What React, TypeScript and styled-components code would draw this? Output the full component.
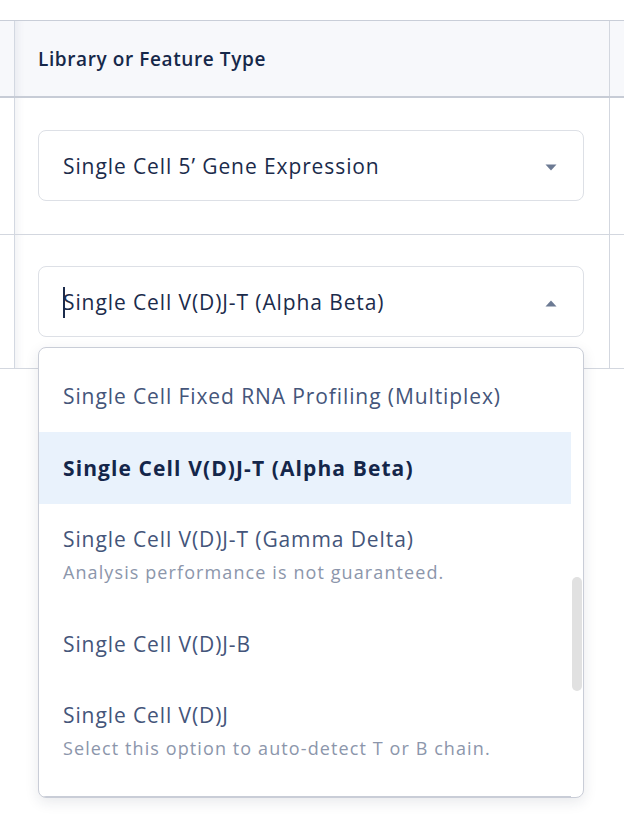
import React from 'react';
import styled, { createGlobalStyle } from 'styled-components';

const GlobalStyle = createGlobalStyle`
  html, body {
    margin: 0;
    padding: 0;
    background: #ffffff;
    overflow: hidden;
  }
  body {
    font-family: "Open Sans", Lato, sans-serif;
    -webkit-font-smoothing: antialiased;
  }
`;

type Option = { label: string; hint?: string; active?: boolean };

const options: Option[] = [
  { label: 'Single Cell Fixed RNA Profiling (Multiplex)' },
  { label: 'Single Cell V(D)J-T (Alpha Beta)', active: true },
  { label: 'Single Cell V(D)J-T (Gamma Delta)', hint: 'Analysis performance is not guaranteed.' },
  { label: 'Single Cell V(D)J-B' },
  { label: 'Single Cell V(D)J', hint: 'Select this option to auto-detect T or B chain.' },
];

const Caret: React.FC<{ up?: boolean }> = ({ up }) => (
  <CaretIcon width="12" height="7" viewBox="0 0 12 7" $up={up}>
    <path d="M0.5 0.5 L11.5 0.5 L6 6.5 Z" fill="#6c7a93" />
  </CaretIcon>
);

const App: React.FC = () => {
  return (
    <Page>
      <GlobalStyle />
      <Table>
        <HeaderRow>
          <EdgeCell />
          <MainCell>
            <HeaderTitle>Library or Feature Type</HeaderTitle>
          </MainCell>
          <TailCell />
        </HeaderRow>

        <Row $top={32} $bottom={33}>
          <EdgeCell />
          <MainCell>
            <SelectBox>
              <SelectValue>Single Cell 5’ Gene Expression</SelectValue>
              <Caret />
            </SelectBox>
          </MainCell>
          <TailCell />
        </Row>

        <Row $top={31} $bottom={31}>
          <EdgeCell />
          <MainCell>
            <SelectWrap>
              <SelectBox>
                <SelectValue>
                  <TextCursor />
                  Single Cell V(D)J-T (Alpha Beta)
                </SelectValue>
                <Caret up />
              </SelectBox>
              <Dropdown>
                <OptionList>
                  {options.map((o) => (
                    <OptionItem key={o.label} $active={o.active} $tall={!!o.hint}>
                      <OptionLabel $active={o.active}>{o.label}</OptionLabel>
                      {o.hint && <OptionHint>{o.hint}</OptionHint>}
                    </OptionItem>
                  ))}
                  <ListDivider />
                </OptionList>
                <ScrollTrack>
                  <ScrollThumb />
                </ScrollTrack>
              </Dropdown>
            </SelectWrap>
          </MainCell>
          <TailCell />
        </Row>
      </Table>
    </Page>
  );
};

const Page = styled.div`
  width: 624px;
  height: 820px;
  padding-top: 20px;
  box-sizing: border-box;
`;

const Table = styled.div`
  display: flex;
  flex-direction: column;
  border-top: 1px solid #c9ced8;
`;

const HeaderRow = styled.div`
  display: flex;
  height: 75px;
  background: #f7f8fb;
  border-bottom: 2px solid #c7ccd6;
`;

const Row = styled.div<{ $top: number; $bottom: number }>`
  display: flex;
  border-bottom: 1px solid #d3d7df;

  & > div:nth-child(2) {
    padding-top: ${(p) => p.$top}px;
    padding-bottom: ${(p) => p.$bottom}px;
  }
`;

const EdgeCell = styled.div`
  width: 14px;
  flex-shrink: 0;
  border-right: 1px solid #d3d8e1;
`;

const MainCell = styled.div`
  flex: 1;
  display: flex;
  align-items: center;
  padding: 0 25px 0 23px;
  border-right: 1px solid #d3d7df;
  box-shadow: inset 10px 0 8px -8px rgba(40, 55, 90, 0.08);
`;

const TailCell = styled.div`
  width: 14px;
  flex-shrink: 0;
`;

const HeaderTitle = styled.div`
  font-size: 19px;
  font-weight: 600;
  letter-spacing: 0.6px;
  color: #16284a;
  padding-top: 1px;
`;

const SelectWrap = styled.div`
  position: relative;
  flex: 1;
`;

const SelectBox = styled.div`
  flex: 1;
  height: 71px;
  box-sizing: border-box;
  display: flex;
  align-items: center;
  justify-content: space-between;
  padding: 0 26px 0 24px;
  border: 1px solid #dde0e6;
  border-radius: 8px;
  background: #ffffff;
`;

const SelectValue = styled.div`
  position: relative;
  font-size: 21px;
  letter-spacing: 0.9px;
  color: #1b2b4b;
`;

const TextCursor = styled.span`
  position: absolute;
  left: 0;
  top: -1px;
  width: 1.5px;
  height: 31px;
  background: #1b2b4b;
`;

const CaretIcon = styled.svg<{ $up?: boolean }>`
  display: block;
  transform: ${(p) => (p.$up ? 'rotate(180deg)' : 'none')};
  margin-top: 3px;
`;

const Dropdown = styled.div`
  position: absolute;
  top: 81px;
  left: 0;
  right: 0;
  height: 451px;
  box-sizing: border-box;
  display: flex;
  background: #ffffff;
  border: 1px solid #c9cdd7;
  border-radius: 8px;
  box-shadow: 0 4px 14px rgba(30, 40, 70, 0.1);
  overflow: hidden;
  z-index: 2;
`;

const OptionList = styled.div`
  flex: 1;
  display: flex;
  flex-direction: column;
  padding-top: 12px;
`;

const OptionItem = styled.div<{ $active?: boolean; $tall?: boolean }>`
  display: flex;
  flex-direction: column;
  justify-content: ${(p) => (p.$tall ? 'flex-start' : 'center')};
  height: ${(p) => (p.$tall ? 104 : 72)}px;
  box-sizing: border-box;
  padding: ${(p) => (p.$tall ? '21px 20px 0 24px' : '0 20px 0 24px')};
  background: ${(p) => (p.$active ? '#e9f2fc' : 'transparent')};
  flex-shrink: 0;
`;

const OptionLabel = styled.div<{ $active?: boolean }>`
  font-size: 21px;
  line-height: 28px;
  letter-spacing: ${(p) => (p.$active ? 1.1 : 0.9)}px;
  font-weight: ${(p) => (p.$active ? 700 : 400)};
  color: ${(p) => (p.$active ? '#14264a' : '#44557a')};
`;

const OptionHint = styled.div`
  margin-top: 8px;
  font-size: 18px;
  line-height: 22px;
  letter-spacing: 1.1px;
  color: #8c96ab;
`;

const ListDivider = styled.div`
  margin-top: 12px;
  height: 1px;
  background: #c9cdd7;
`;

const ScrollTrack = styled.div`
  width: 12px;
  flex-shrink: 0;
  display: flex;
  flex-direction: column;
  align-items: center;
`;

const ScrollThumb = styled.div`
  margin-top: 229px;
  width: 10px;
  height: 114px;
  border-radius: 5px;
  background: #e1e1e1;
`;

export default App;
